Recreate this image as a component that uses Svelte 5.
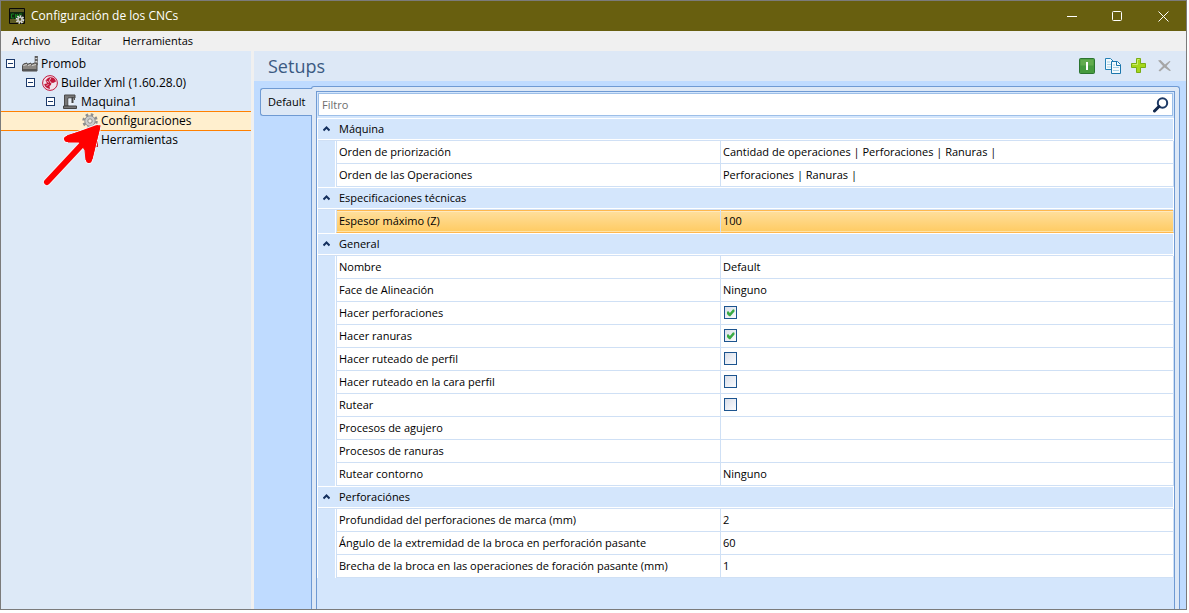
<script lang="ts">
  type Row = { name: string; value?: string; checked?: boolean; active?: boolean };
  type Group = { title: string; rows: Row[] };

  const menu = ["Archivo", "Editar", "Herramientas"];

  const tree = [
    { label: "Promob", icon: "factory", level: 0, open: true },
    { label: "Builder Xml (1.60.28.0)", icon: "builder", level: 1, open: true },
    { label: "Maquina1", icon: "machine", level: 2, open: true },
    { label: "Configuraciones", icon: "gear", level: 3 },
    { label: "Herramientas", icon: "tools", level: 3 },
  ];
  let selected = $state("Configuraciones");
  let filter = $state("");

  let groups: Group[] = $state([
    {
      title: "Máquina",
      rows: [
        { name: "Orden de priorización", value: "Cantidad de operaciones | Perforaciones | Ranuras |" },
        { name: "Orden de las Operaciones", value: "Perforaciones | Ranuras |" },
      ],
    },
    {
      title: "Especificaciones técnicas",
      rows: [{ name: "Espesor máximo (Z)", value: "100", active: true }],
    },
    {
      title: "General",
      rows: [
        { name: "Nombre", value: "Default" },
        { name: "Face de Alineación", value: "Ninguno" },
        { name: "Hacer perforaciones", checked: true },
        { name: "Hacer ranuras", checked: true },
        { name: "Hacer ruteado de perfil", checked: false },
        { name: "Hacer ruteado en la cara perfil", checked: false },
        { name: "Rutear", checked: false },
        { name: "Procesos de agujero", value: "" },
        { name: "Procesos de ranuras", value: "" },
        { name: "Rutear contorno", value: "Ninguno" },
      ],
    },
    {
      title: "Perforaciónes",
      rows: [
        { name: "Profundidad del perforaciones de marca (mm)", value: "2" },
        { name: "Ángulo de la extremidad de la broca en perforación pasante", value: "60" },
        { name: "Brecha de la broca en las operaciones de foración pasante (mm)", value: "1" },
      ],
    },
  ]);

  let closed: Record<string, boolean> = $state({});

  function matches(row: Row) {
    return row.name.toLowerCase().includes(filter.toLowerCase());
  }
</script>

{#snippet treeIcon(name: string)}
  <svg class="icon" viewBox="0 0 16 16" aria-hidden="true">
    {#if name === "factory"}
      <path d="M13 0h2.500v9H13z" fill="#d8d8d8" stroke="#777" stroke-width=".8" />
      <path d="M13 1h2.500M13 4h2.500" stroke="#444" stroke-width="1.500" />
      <path d="M.5 15V9.500l1-1.500 3.500-1v1.500L9 7v1.500L12.500 7H15v8z" fill="#8b8782" stroke="#4c4a48" />
      <path d="M1.500 9.500L5 8.500M6 9.500L9 8.500M10 9.500L14 8.500" stroke="#d6d4d0" />
      <path d="M1 14h14" stroke="#555" stroke-width="2" />
    {:else if name === "builder"}
      <circle cx="8" cy="8" r="7.400" fill="#f1e3ec" stroke="#c2183c" />
      <path d="M8.500 2c3 .2 5 1.800 5.500 4.500L11 8 9.500 7.500 9 10l-1.500 1 .5 3C4.500 13.500 2.500 11.500 2.200 9L5 8.500 3.500 5.500 6 3z" fill="#c2183c" />
      <path d="M9 2.500L7.500 5.500 9 8M4.500 6L7 7.500M4.500 10.500l2-1" stroke="#f1e3ec" stroke-width=".8" fill="none" />
    {:else if name === "machine"}
      <path d="M2.500 1h10.500v3H6v8H2.500z" fill="#777" stroke="#484848" />
      <path d="M6.500 4.500H12V11H6.500z" fill="#e8eff7" />
      <path d="M10.500 3v6" stroke="#444" stroke-width="2" />
      <path d="M12.500 2v4" stroke="#555" />
      <path d="M1.500 12h13v2.500h-13z" fill="#777" stroke="#444" />
    {:else if name === "gear"}
      <circle cx="8" cy="8" r="6.500" fill="none" stroke="#8e8e8e" stroke-width="2.500" stroke-dasharray="2.550 2.550" />
      <circle cx="8" cy="8" r="5.200" fill="#cdcdcd" stroke="#929292" />
      <circle cx="8" cy="8" r="2.200" fill="#f3eee5" stroke="#8c8c8c" />
    {:else}
      <path d="M12 6h4v9h-4z" fill="#c9202c" />
      <path d="M14 2v5" stroke="#777" stroke-width="2" />
    {/if}
  </svg>
{/snippet}

<div class="window">
  <header class="titlebar">
    <svg class="app-icon" viewBox="0 0 16 16" aria-hidden="true">
      <path d="M.5.500h15v15H.5z" fill="#5c5a22" stroke="#080808" />
      <path d="M1 4h14v7H1z" fill="#12250f" />
      <path d="M5 6H2.500v4H5M6.500 10V6l2 4V6M13 6h-2.500v3" fill="none" stroke="#14801f" />
      <circle cx="11" cy="11.500" r="3.300" fill="none" stroke="#ddd" stroke-width="2" stroke-dasharray="1.500 1" />
      <circle cx="11" cy="11.500" r="2" fill="none" stroke="#ccc" stroke-width="1.500" />
    </svg>
    <h1>Configuración de los CNCs</h1>
    <div class="controls">
      <button type="button" aria-label="Minimizar"><svg viewBox="0 0 11 11"><path d="M1 5.500h10" /></svg></button>
      <button type="button" aria-label="Maximizar"><svg viewBox="0 0 11 11"><rect x=".5" y=".5" width="9" height="9" rx="1" /></svg></button>
      <button type="button" aria-label="Cerrar"><svg viewBox="0 0 11 11"><path d="M.5.500l10 10M10.500.500l-10 10" /></svg></button>
    </div>
  </header>

  <nav class="menubar">
    {#each menu as item}
      <button type="button">{item}</button>
    {/each}
  </nav>

  <div class="body">
    <aside class="tree">
      <ul>
        {#each tree as node}
          <li class={["level-" + node.level, { selected: node.label === selected }]}>
            <span class="toggle" class:open={node.open}></span>
            {@render treeIcon(node.icon)}
            <button type="button" onclick={() => (selected = node.label)}>{node.label}</button>
          </li>
        {/each}
      </ul>
      <svg class="arrow" viewBox="0 0 60 64" aria-hidden="true">
        <path class="halo" d="M7 57L50 11M27 14L57 3L49 35" />
        <path class="shaft" d="M7 57L50 11M27 14L57 3L49 35" />
        <path class="head" d="M27 11Q24 14 28 17L39 17L45 25L46 35L52 34L60 1z" />
      </svg>
    </aside>

    <main>
      <div class="heading">
        <h2>Setups</h2>
        <div class="tools">
          <button type="button" aria-label="Activar">
            <svg viewBox="0 0 16 16">
              <rect x=".5" y=".5" width="15" height="15" rx="1" fill="#469a3e" stroke="#2b7430" />
              <path d="M1.500 1.500h13v6h-13z" fill="#62ab4e" />
              <path d="M7 4h2v8H7z" fill="#fff" />
            </svg>
          </button>
          <button type="button" aria-label="Copiar">
            <svg viewBox="0 0 16 16">
              <path d="M.5.500h5l3 3v8h-8z" fill="#f4fafd" stroke="#2480b5" />
              <path d="M2 4h3M2 6.500h5M2 9h5" stroke="#a8cfe3" />
              <path d="M6.500 3.500h6l3 3v9h-9z" fill="#f4fafd" stroke="#1c77ad" />
              <path d="M11.500 3.500v4h4" fill="none" stroke="#1c77ad" />
              <path d="M8 7h2M8 9.500h6M8 12.500h6" stroke="#a8cfe3" />
            </svg>
          </button>
          <button type="button" aria-label="Agregar">
            <svg viewBox="0 0 16 16">
              <path d="M5.500.500h4v5h5v4h-5v5h-4v-5h-5v-4h5z" fill="#a5d61c" stroke="#79ad14" />
              <path d="M6.500 6.500v-5h2M1.500 6.500h5" fill="none" stroke="#cdec68" />
            </svg>
          </button>
          <button type="button" aria-label="Eliminar">
            <svg viewBox="0 0 16 16">
              <path d="M1 2.500L3.500 2 8 6.500 12.500 3l1 .5L9.500 8l4.500 4.500-1.500.5L7.500 9.500 3 13.500l-1.500-1L6 8z" fill="#a6a6a6" />
            </svg>
          </button>
        </div>
      </div>

      <div class="workspace">
        <button class="tab" type="button">Default</button>
        <section class="page">
          <div class="sheet">
            <label class="filter">
              <input type="text" placeholder="Filtro" aria-label="Filtro" bind:value={filter} />
              <svg viewBox="0 0 16 16" aria-hidden="true">
                <circle cx="9.500" cy="6" r="4.700" fill="#fff" stroke="#1d3a66" stroke-width="2" />
                <path d="M6 9.500L1.500 14" stroke="#12284d" stroke-width="3" stroke-linecap="round" />
              </svg>
            </label>

            <table>
              <colgroup><col class="c-gutter" /><col class="c-name" /><col /></colgroup>
              {#each groups as group}
                <tbody>
                  <tr class="group">
                    <th colspan="3">
                      <button type="button" onclick={() => (closed[group.title] = !closed[group.title])}>
                        <svg class:closed={closed[group.title]} viewBox="0 0 7 6" aria-hidden="true"><path d="M.5 4.500l3-3 3 3" /></svg>
                        {group.title}
                      </button>
                    </th>
                  </tr>
                  {#if !closed[group.title]}
                    {#each group.rows.filter(matches) as row}
                      <tr class:active={row.active}>
                        <td class="gutter"></td>
                        <td class="name">{row.name}</td>
                        <td class="value">
                          {#if row.checked !== undefined}
                            <input type="checkbox" aria-label={row.name} bind:checked={row.checked} />
                          {:else}
                            {row.value}
                          {/if}
                        </td>
                      </tr>
                    {/each}
                  {/if}
                </tbody>
              {/each}
            </table>
          </div>
        </section>
      </div>
    </main>
  </div>
</div>

<style>
  :global(body) { background: #fff; }

  * { box-sizing: border-box; }

  .window {
    display: flex; flex-direction: column;
    height: calc(100vh - 3px); margin-right: 2px;
    border: 1px solid #7b7b7b; background: #f0f0f0;
    font-family: "Open Sans", "Noto Sans", sans-serif;
    font-size: 11px; line-height: 16px; color: #000;
    overflow: hidden;
  }

  button {
    border: 0; padding: 0; background: none;
    font: inherit; color: inherit; text-align: left;
  }

  h1, h2 { margin: 0; font-weight: 400; }

  .titlebar {
    display: flex; align-items: center; gap: 6px;
    height: 30px; padding-left: 8px;
    background: #685f0f; color: #fff;
  }
  .app-icon { width: 16px; height: 16px; }
  h1 { flex: 1; font-size: 12px; }
  .controls { display: flex; }
  .controls button { display: grid; place-items: center; width: 46px; height: 30px; }
  .controls svg { width: 11px; height: 11px; fill: none; stroke: #fff; }

  .menubar {
    display: flex; gap: 21px; height: 20px; padding-left: 11px;
    background: #f0f0f0;
  }

  .body { flex: 1; display: flex; min-height: 0; gap: 3px; }

  .tree { position: relative; width: 250px; background: #dde9f7; font-size: 12px; }
  ul { margin: 0; padding: 3px 0 0; list-style: none; }
  li { display: flex; align-items: center; height: 19px; border: solid transparent; border-width: 1px 0; }
  .level-0 { padding-left: 5px; }
  .level-1 { padding-left: 25px; }
  .level-2 { padding-left: 45px; }
  .level-3 { padding-left: 65px; }
  li.selected { height: 20px; margin-bottom: -1px; background: #ffefce; border-color: #ff8000; }
  .toggle { width: 9px; height: 9px; margin-right: 7px; }
  .toggle.open {
    border: 1px solid #1c3a6b;
    background: linear-gradient(#1c3a6b, #1c3a6b) center / 5px 1px no-repeat #fff;
  }
  .icon { width: 16px; height: 16px; margin-right: 3px; }

  /* pointer drawn over the tree */
  .arrow { position: absolute; left: 39px; top: 74px; width: 60px; height: 64px; overflow: visible; }
  .arrow path { fill: none; stroke: #f00; stroke-linecap: round; stroke-linejoin: round; }
  .arrow .halo { stroke: #f3f3fa; stroke-width: 8; }
  .arrow .shaft { stroke-width: 6; }
  .arrow .head { fill: #f00; stroke-width: 1; }

  main { flex: 1; display: flex; flex-direction: column; min-width: 0; background: #bfdbff; }
  .heading {
    display: flex; align-items: center; justify-content: space-between;
    height: 30px; padding: 0 13px 0 14px; background: #dde8f6;
  }
  h2 { font-size: 18px; line-height: 28px; color: #3b5a82; }
  .tools { display: flex; gap: 10px; }
  .tools button, .tools svg { display: block; width: 16px; height: 16px; }

  .workspace { flex: 1; display: flex; align-items: flex-start; min-height: 0; padding: 5px 6px 0; }
  .tab {
    width: 52px; height: 28px; margin: 2px -1px 0 0; padding-left: 7px; z-index: 1;
    border: 1px solid #6f9ad3; border-right: 0; border-radius: 3px 0 0 3px;
    background: #dde8f6;
  }
  .page {
    flex: 1; align-self: stretch; min-width: 0; padding: 4px 4px 0;
    border: 1px solid #6f9ad3; border-bottom: 0; border-radius: 3px 3px 0 0;
    background: #dde8f6;
  }
  .sheet {
    height: 100%; border: 1px solid #6f9ad3; border-bottom: 0;
    background: #d4e6fc;
  }

  .filter {
    display: flex; align-items: center; height: 23px; margin: 1px 1px 2px; padding-right: 3px;
    border: 1px solid #9dbfe8; background: #fff;
  }
  .filter input {
    flex: 1; border: 0; outline: 0; padding: 0 3px; background: none;
    font: inherit; color: inherit;
  }
  .filter input::placeholder { color: #6d6d6d; }
  .filter svg { width: 16px; height: 16px; }

  table { width: 100%; table-layout: fixed; border-collapse: separate; border-spacing: 0; }
  .c-gutter { width: 19px; }
  .c-name { width: 385px; }
  td, th { height: 23px; padding: 0; font-weight: 400; text-align: left; }
  th { border: 1px solid #fff; border-bottom: 0; box-shadow: inset 0 -1px #d0e0f5, inset 0 -2px #fff; vertical-align: top; }
  th button { display: flex; align-items: center; width: 100%; height: 20px; }
  th svg { width: 7px; height: 6px; margin: 0 9px 0 5px; fill: none; stroke: #15305e; stroke-width: 2; }
  th svg.closed { transform: rotate(180deg); }
  .gutter { border-left: 1px solid #fff; border-right: 1px solid #fff; }
  .name, .value { background: #fff; border: solid #cfe0f5; }
  .name { padding-left: 2px; border-width: 0 1px 1px; }
  .value { padding-left: 2px; border-width: 0 1px 1px 0; white-space: nowrap; }
  .active .name, .active .value {
    background: linear-gradient(#ffe0a0, #ffcb62);
    border-bottom-color: #ffb84e; box-shadow: inset 0 1px #ffb84e, inset 0 2px #ffe9bd, inset 0 -1px #ffe3a6;
  }

  input[type="checkbox"] {
    appearance: none; display: grid; place-items: center;
    width: 13px; height: 13px; margin: 0 0 1px 1px;
    border: 1px solid #1c548f; background: linear-gradient(135deg, #d9dee9, #fbfcfe);
  }
  input[type="checkbox"]:checked::before {
    content: ""; width: 8px; height: 8px; background: #3aab45;
    clip-path: polygon(0 40%, 25% 35%, 42% 55%, 82% 8%, 100% 15%, 100% 38%, 45% 100%, 30% 95%, 0 62%);
  }
</style>
